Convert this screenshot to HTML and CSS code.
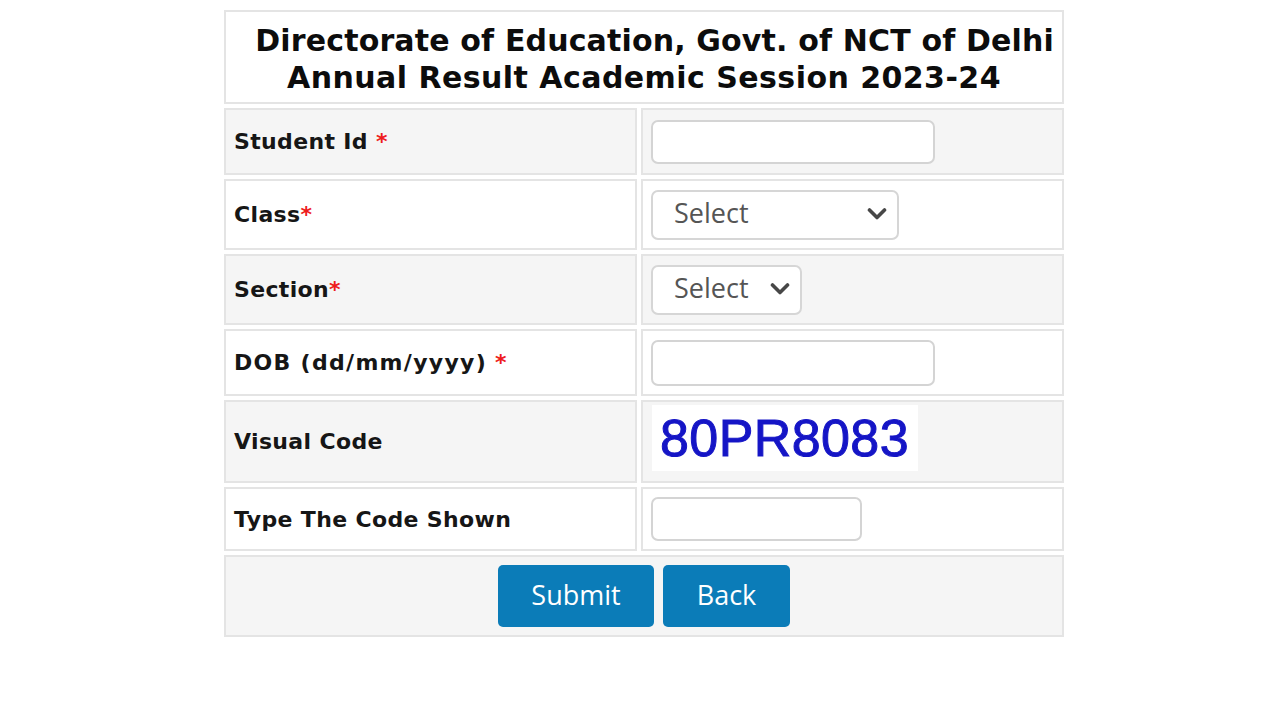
FILE: index.html
```html
<!DOCTYPE html>
<html>
<head>
<meta charset="utf-8">
<title>Annual Result</title>
<link rel="stylesheet" href="styles.css">
</head>
<body>
<table class="form">
  <colgroup><col class="c1"><col class="c2"></colgroup>
  <tr class="r-head">
    <td colspan="2" class="head">
      <div class="h1">&nbsp;&nbsp;Directorate of Education, Govt. of NCT of Delhi</div>
      <div class="h2">Annual Result Academic Session 2023-24</div>
    </td>
  </tr>
  <tr class="r1 alt">
    <td class="lbl">Student Id <span class="req">*</span></td>
    <td><input class="txt w-long" type="text"></td>
  </tr>
  <tr class="r2">
    <td class="lbl">Class<span class="req">*</span></td>
    <td>
      <div class="sel sel-class">
        <select><option>Select</option></select>
        <svg class="chev" viewBox="0 0 20 12" width="20" height="12"><polyline points="2.5,2 10,9.5 17.5,2" fill="none" stroke="#474747" stroke-width="3.6" stroke-linecap="round" stroke-linejoin="round"/></svg>
      </div>
    </td>
  </tr>
  <tr class="r3 alt">
    <td class="lbl">Section<span class="req">*</span></td>
    <td>
      <div class="sel sel-section">
        <select><option>Select</option></select>
        <svg class="chev" viewBox="0 0 20 12" width="20" height="12"><polyline points="2.5,2 10,9.5 17.5,2" fill="none" stroke="#474747" stroke-width="3.6" stroke-linecap="round" stroke-linejoin="round"/></svg>
      </div>
    </td>
  </tr>
  <tr class="r4">
    <td class="lbl"><span class="dob-text">DOB (dd/mm/yyyy)</span> <span class="req">*</span></td>
    <td><input class="txt w-long dob" type="text"></td>
  </tr>
  <tr class="r5 alt">
    <td class="lbl">Visual Code</td>
    <td><div class="captcha">80PR8083</div></td>
  </tr>
  <tr class="r6">
    <td class="lbl">Type The Code Shown</td>
    <td><input class="txt w-short" type="text"></td>
  </tr>
  <tr class="r7 alt">
    <td colspan="2" class="actions">
      <div class="btns">
        <button class="btn btn-submit" type="button">Submit</button>
        <button class="btn btn-back" type="button">Back</button>
      </div>
    </td>
  </tr>
</table>
</body>
</html>
```

FILE: styles.css
```css
html, body {
  margin: 0;
  padding: 0;
  background: #ffffff;
}

body {
  font-family: "DejaVu Sans", Verdana, sans-serif;
  color: #111;
}

.form {
  border-collapse: separate;
  border-spacing: 4px;
  margin: 6px 0 0 220px;
  width: 848px;
  table-layout: fixed;
}

.c1 { width: 413px; }
.c2 { width: 423px; }

.form td {
  border: 2px solid #e4e4e4;
  background: #ffffff;
  padding: 0 0 0 8px;
  vertical-align: middle;
  box-sizing: border-box;
}

.form tr.alt td { background: #f5f5f5; }

.r-head { height: 94px; }
.r1 { height: 67px; }
.r2 { height: 71px; }
.r3 { height: 71px; }
.r4 { height: 67px; }
.r5 { height: 83px; }
.r6 { height: 64px; }
.r7 { height: 82px; }

.head {
  text-align: center;
  font-weight: bold;
  font-size: 30px;
  line-height: 37px;
  color: #0c0c0c;
  padding: 4px 0 0 0 !important;
  letter-spacing: 0.15px;
}
.h2 { letter-spacing: 0.45px; }

.lbl {
  font-weight: bold;
  font-size: 22px;
  letter-spacing: 0.35px;
  color: #161616;
}
.dob-text { letter-spacing: 1.3px; }

.req { color: #ee1c1c; }

.txt {
  display: block;
  box-sizing: border-box;
  height: 44px;
  border: 2px solid #d4d4d4;
  border-radius: 7px;
  background: #fff;
  margin: 0;
  padding: 0 10px;
  font-size: 20px;
  outline: none;
}
.w-long { width: 284px; }
.dob { height: 46px; }
.w-short { width: 211px; }

.sel {
  position: relative;
  display: block;
}
.sel select {
  display: block;
  appearance: none;
  -webkit-appearance: none;
  box-sizing: border-box;
  height: 50px;
  border: 2px solid #d6d6d6;
  border-radius: 7px;
  background: #fff;
  font-family: "Open Sans", sans-serif;
  font-size: 27px;
  color: #555;
  padding: 0 0 4px 21px;
  margin: 0;
  outline: none;
}
.sel-class select { width: 248px; }
.sel-section select { width: 151px; }

.chev {
  position: absolute;
  top: 18px;
}
.sel-class .chev { left: 216px; }
.sel-section .chev { left: 119px; }

.captcha {
  display: inline-block;
  background: #ffffff;
  width: 266px;
  height: 66px;
  box-sizing: border-box;
  margin: 0 0 8px 1px;
  padding: 0 0 0 8px;
  font-family: "Liberation Sans", Arial, sans-serif;
  font-size: 52px;
  line-height: 66px;
  color: #1515c6;
  -webkit-text-stroke: 1px #1515c6;
  letter-spacing: 0.4px;
}

.actions { padding: 0 !important; }

.btns {
  display: flex;
  justify-content: center;
  gap: 9px;
}

.btn {
  height: 62px;
  border: none;
  border-radius: 5px;
  background: #0b7cb8;
  color: #fff;
  font-family: "Open Sans", sans-serif;
  font-size: 27px;
  margin: 0;
  padding: 0 0 3px 0;
  cursor: pointer;
}
.btn-submit { width: 156px; }
.btn-back { width: 127px; }
```
